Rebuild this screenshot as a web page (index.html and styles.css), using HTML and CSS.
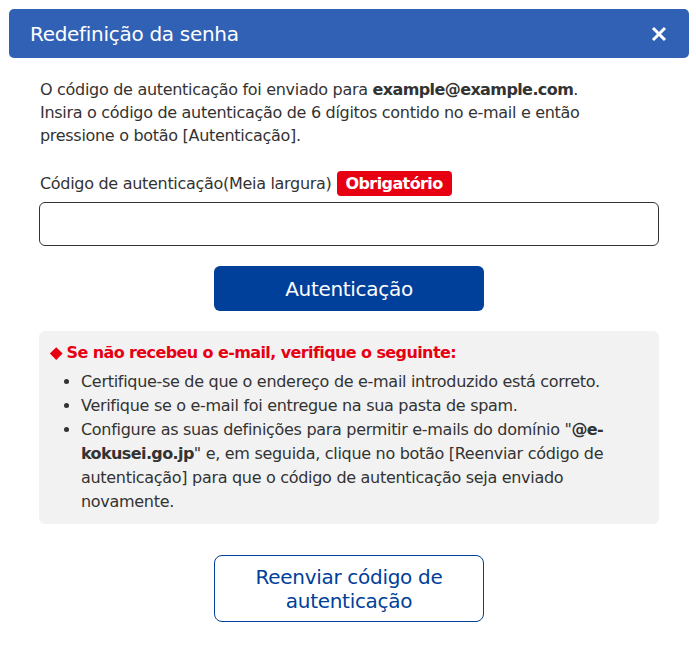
FILE: index.html
```html
<!DOCTYPE html>
<html lang="pt">
<head>
<meta charset="utf-8">
<title>Redefinição da senha</title>
<link rel="stylesheet" href="styles.css">
</head>
<body>
<div class="dialog">
  <div class="dialog-header">
    <h1 class="dialog-title">Redefinição da senha</h1>
    <button class="close-btn" aria-label="Fechar">
      <svg width="16" height="16" viewBox="0 0 16 16"><path d="M2 2 L14 14 M14 2 L2 14" stroke="#fff" stroke-width="3" stroke-linecap="butt"/></svg>
    </button>
  </div>
  <div class="dialog-body">
    <p class="intro">O código de autenticação foi enviado para <strong>example@example.com</strong>.<br>Insira o código de autenticação de 6 dígitos contido no e-mail e então pressione o botão [Autenticação].</p>
    <div class="field">
      <label class="field-label">Código de autenticação(Meia largura) <span class="badge">Obrigatório</span></label>
      <input class="field-input" type="text">
    </div>
    <div class="actions">
      <button class="btn-primary">Autenticação</button>
    </div>
    <div class="notice">
      <p class="notice-title"><span class="diamond"></span>Se não recebeu o e-mail, verifique o seguinte:</p>
      <ul class="notice-list">
        <li>Certifique-se de que o endereço de e-mail introduzido está correto.</li>
        <li>Verifique se o e-mail foi entregue na sua pasta de spam.</li>
        <li>Configure as suas definições para permitir e-mails do domínio "<strong>@e-</strong><strong>kokusei.go.jp</strong>" e, em seguida, clique no botão [Reenviar código de autenticação] para que o código de autenticação seja enviado novamente.</li>
      </ul>
    </div>
    <div class="actions resend">
      <button class="btn-secondary">Reenviar código de autenticação</button>
    </div>
  </div>
</div>
</body>
</html>
```

FILE: styles.css
```css
html, body {
  margin: 0;
  padding: 0;
  background: #fff;
}
body {
  font-family: "DejaVu Sans", Verdana, sans-serif;
  color: #333;
  font-size: 16px;
  letter-spacing: -0.3px;
}
strong {
  letter-spacing: -0.6px;
}
.dialog {
  width: 680px;
  margin: 9px 0 0 9px;
}
.dialog-header {
  background: #3161b5;
  border-radius: 5px;
  height: 49px;
  display: flex;
  align-items: center;
  justify-content: space-between;
  padding: 0 22px 0 21px;
  box-sizing: border-box;
}
.dialog-title {
  margin: 0;
  font-size: 20px;
  font-weight: normal;
  color: #fff;
}
.close-btn {
  background: none;
  border: 0;
  padding: 0;
  width: 16px;
  height: 16px;
  display: flex;
}
.dialog-body {
  padding: 20px 30px 0 30px;
}
.intro {
  margin: 0 30px 0 1px;
  line-height: 23px;
}
.field {
  margin-top: 24px;
}
.field-label {
  display: flex;
  align-items: center;
  gap: 5px;
  margin-left: 1px;
  line-height: 25px;
}
.badge {
  background: #e60012;
  color: #fff;
  font-weight: bold;
  letter-spacing: -0.6px;
  border-radius: 4px;
  padding: 0 9px;
  font-size: 16px;
  line-height: 25px;
}
.field-input {
  display: block;
  width: 100%;
  box-sizing: border-box;
  height: 44px;
  margin-top: 6px;
  border: 1px solid #333;
  border-radius: 6px;
}
.actions {
  display: flex;
  justify-content: center;
  margin-top: 20px;
}
.btn-primary {
  width: 270px;
  height: 45px;
  background: #00409a;
  color: #fff;
  border: 0;
  border-radius: 6px;
  font-family: inherit;
  font-size: 20px;
  letter-spacing: -0.3px;
}
.notice {
  margin-top: 20px;
  background: #f2f2f2;
  border-radius: 6px;
  padding: 10px 12px 10px 11px;
}
.notice-title {
  margin: 0;
  color: #e60012;
  font-weight: bold;
  letter-spacing: -0.6px;
  line-height: 24px;
  display: flex;
  align-items: center;
}
.diamond {
  display: inline-block;
  width: 8.5px;
  height: 8.5px;
  background: #e60012;
  transform: rotate(45deg);
  margin: 0 6px 0 2px;
}
.notice-list {
  margin: 5px 0 0 0;
  padding-left: 31px;
  line-height: 24px;
}
.resend {
  margin-top: 31px;
}
.btn-secondary {
  width: 270px;
  height: 67px;
  background: #fff;
  color: #00409a;
  border: 1px solid #00409a;
  border-radius: 8px;
  font-family: inherit;
  font-size: 20px;
  letter-spacing: -0.3px;
  line-height: 24px;
  padding: 0 20px;
}
```
